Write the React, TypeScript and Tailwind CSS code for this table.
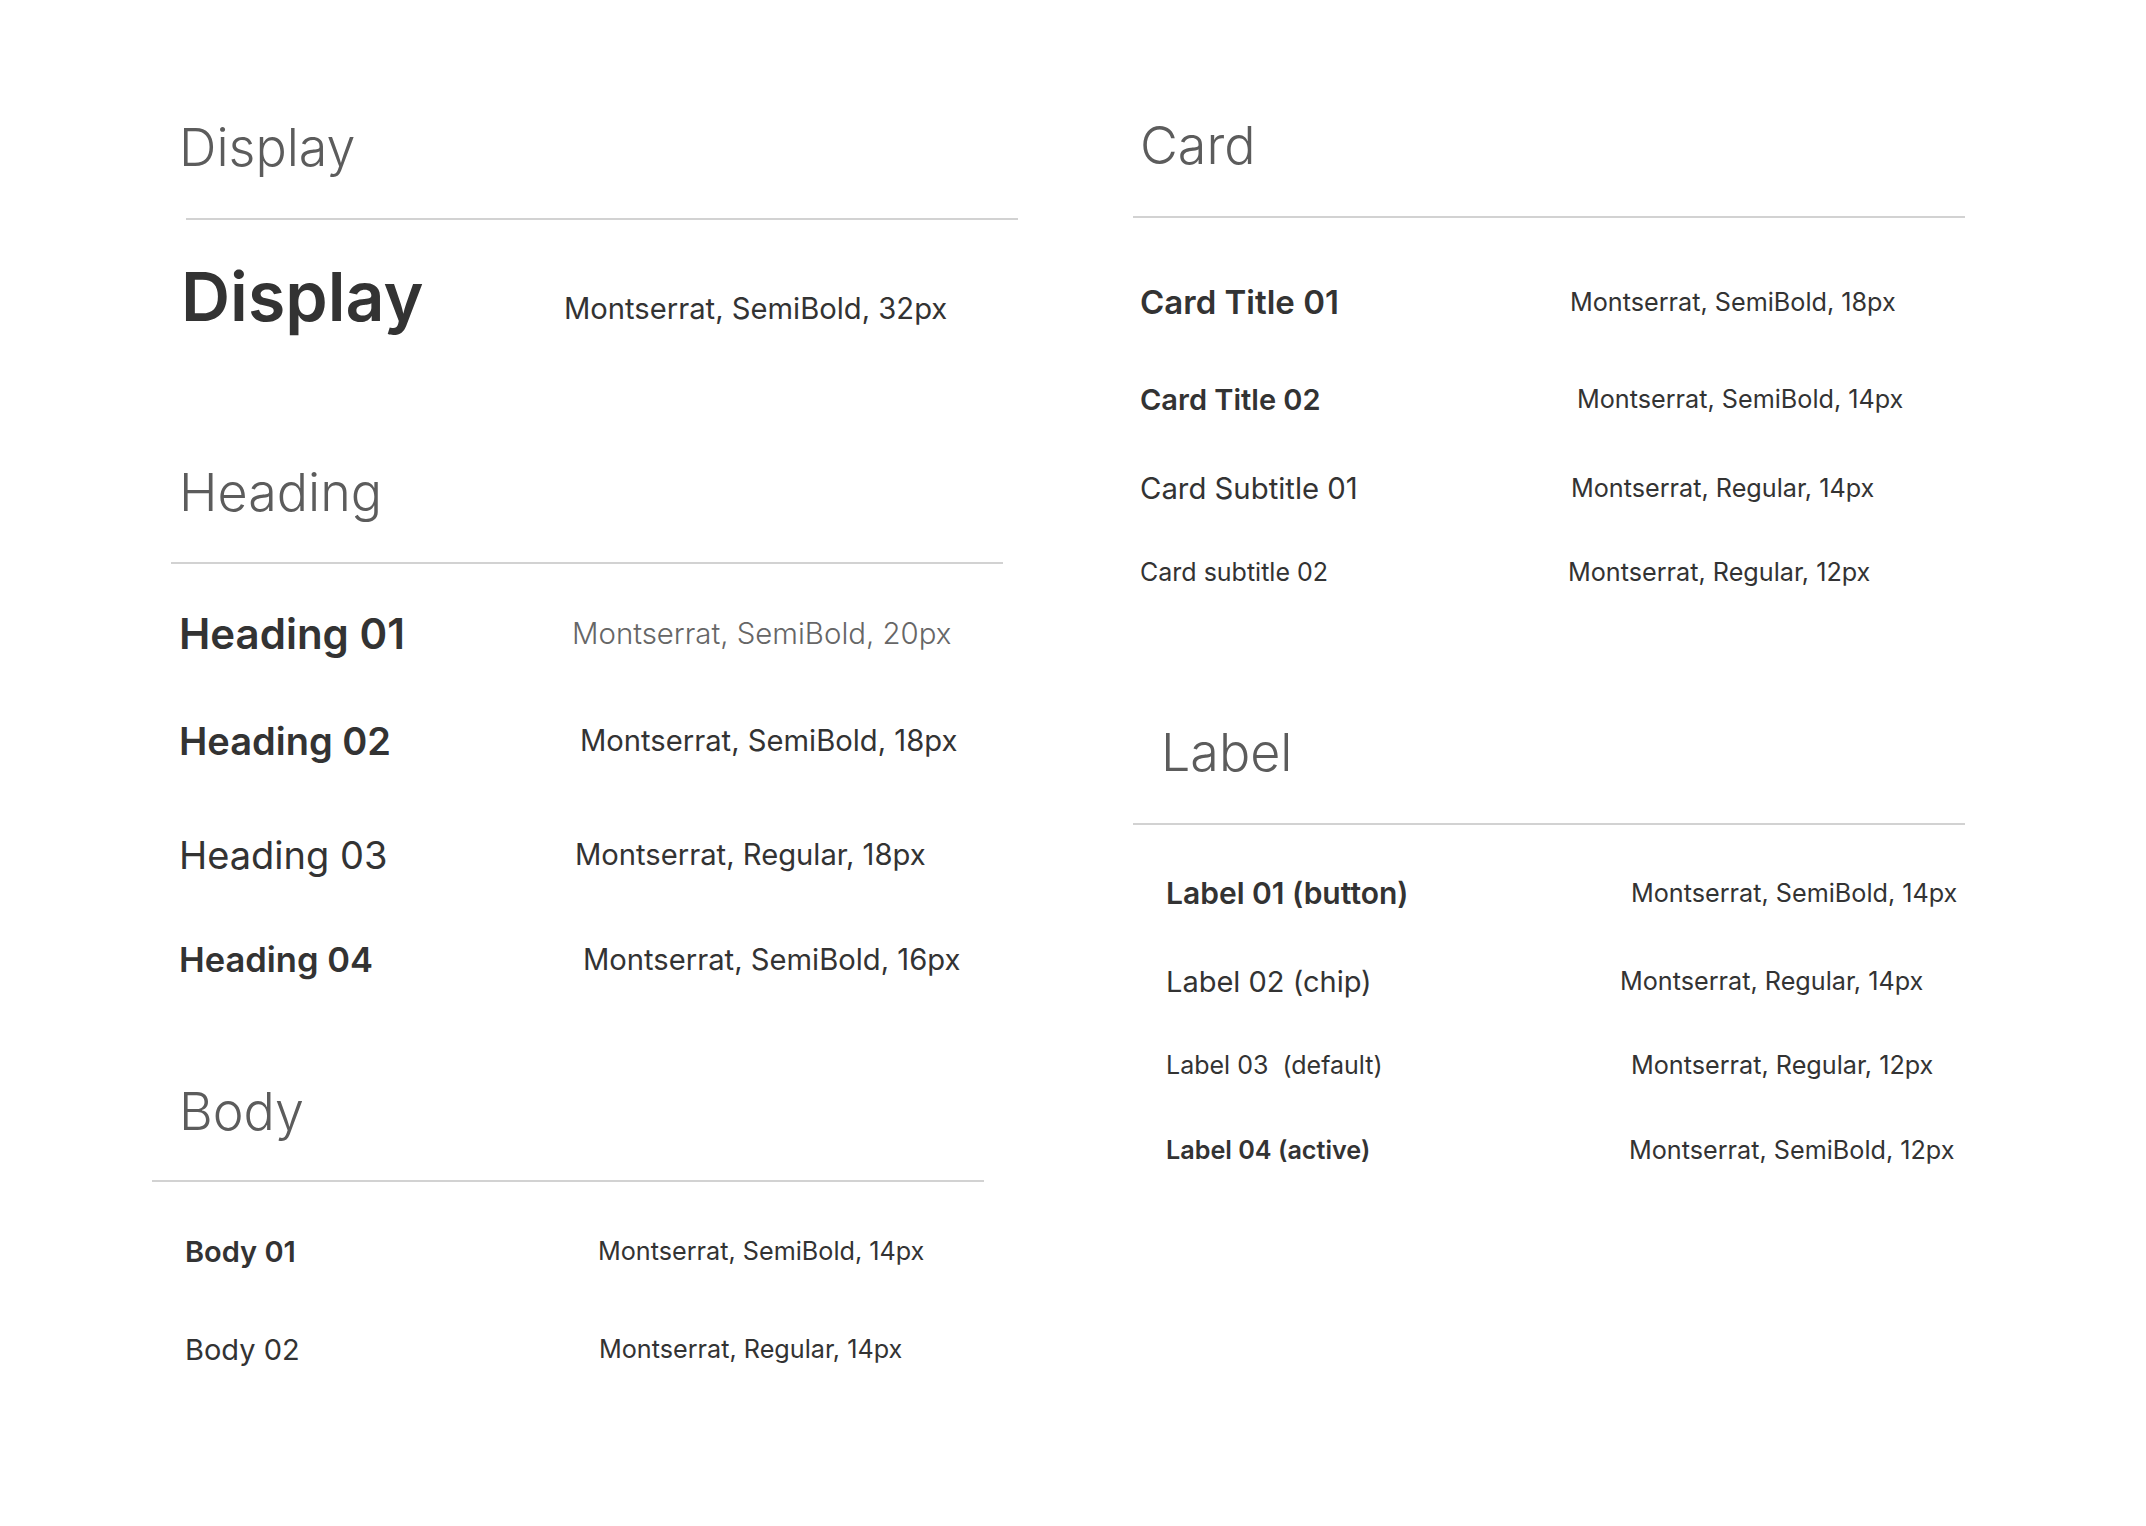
import React from 'react';

type Row = {
  label: string;
  desc: string;
  mt: string;
  labelBox: string;
  labelText: string;
  descText: string;
};

const font = { fontFamily: 'Inter, "Noto Sans", sans-serif' };

// Section title + divider
const SectionHeader: React.FC<{ title: string; mt: string; pad: string; line: string; lineMt: string }> = ({
  title,
  mt,
  pad,
  line,
  lineMt,
}) => (
  <>
    <div className={`flex h-[60px] items-center ${mt} ${pad}`}>
      <span className="text-[52px] font-light leading-none text-[#5c5c5c]">{title}</span>
    </div>
    <div className={`h-[2px] w-[832px] bg-[#d2d2d2] ${lineMt} ${line}`} />
  </>
);

const SpecRow: React.FC<{ row: Row; pad: string }> = ({ row, pad }) => (
  <div className={`flex h-[60px] items-center ${row.mt} ${pad}`}>
    <div className={`shrink-0 ${row.labelBox}`}>
      <span className={`whitespace-pre leading-none text-[#333333] ${row.labelText}`}>{row.label}</span>
    </div>
    <span className={`whitespace-pre leading-none ${row.descText}`}>{row.desc}</span>
  </div>
);

const bigDesc = 'text-[29.2px] font-normal text-[#333333]';
const smallDesc = 'text-[25.2px] font-normal text-[#333333]';

const headingRows: Row[] = [
  { label: 'Heading 01', desc: 'Montserrat, SemiBold, 20px', mt: 'mt-[40px]', labelBox: 'w-[393px]', labelText: 'text-[42px] font-semibold', descText: 'text-[29.4px] font-light text-[#666666]' },
  { label: 'Heading 02', desc: 'Montserrat, SemiBold, 18px', mt: 'mt-[47px]', labelBox: 'w-[401px]', labelText: 'text-[38px] font-semibold', descText: bigDesc },
  { label: 'Heading 03', desc: 'Montserrat, Regular, 18px', mt: 'mt-[54px]', labelBox: 'w-[396px]', labelText: 'text-[38px] font-normal', descText: bigDesc },
  { label: 'Heading 04', desc: 'Montserrat, SemiBold, 16px', mt: 'mt-[45px]', labelBox: 'w-[404px]', labelText: 'text-[34.5px] font-semibold', descText: bigDesc },
];

const bodyRows: Row[] = [
  { label: 'Body 01', desc: 'Montserrat, SemiBold, 14px', mt: 'mt-[40px]', labelBox: 'w-[413px]', labelText: 'text-[29px] font-semibold', descText: smallDesc },
  { label: 'Body 02', desc: 'Montserrat, Regular, 14px', mt: 'mt-[38px]', labelBox: 'w-[414px]', labelText: 'text-[29px] font-normal', descText: smallDesc },
];

const cardRows: Row[] = [
  { label: 'Card Title 01', desc: 'Montserrat, SemiBold, 18px', mt: 'mt-[55px]', labelBox: 'w-[430px]', labelText: 'text-[33px] font-semibold', descText: smallDesc },
  { label: 'Card Title 02', desc: 'Montserrat, SemiBold, 14px', mt: 'mt-[37px]', labelBox: 'w-[437px]', labelText: 'text-[29px] font-semibold', descText: smallDesc },
  { label: 'Card Subtitle 01', desc: 'Montserrat, Regular, 14px', mt: 'mt-[29px]', labelBox: 'w-[431px]', labelText: 'text-[29.3px] font-normal', descText: smallDesc },
  { label: 'Card subtitle 02', desc: 'Montserrat, Regular, 12px', mt: 'mt-[24px]', labelBox: 'w-[428px]', labelText: 'text-[25px] font-normal', descText: smallDesc },
];

const labelRows: Row[] = [
  { label: 'Label 01 (button)', desc: 'Montserrat, SemiBold, 14px', mt: 'mt-[39px]', labelBox: 'w-[465px]', labelText: 'text-[30px] font-semibold', descText: smallDesc },
  { label: 'Label 02 (chip)', desc: 'Montserrat, Regular, 14px', mt: 'mt-[28px]', labelBox: 'w-[454px]', labelText: 'text-[29px] font-normal', descText: smallDesc },
  { label: 'Label 03  (default)', desc: 'Montserrat, Regular, 12px', mt: 'mt-[24px]', labelBox: 'w-[465px]', labelText: 'text-[25px] font-normal', descText: smallDesc },
  { label: 'Label 04 (active)', desc: 'Montserrat, SemiBold, 12px', mt: 'mt-[25px]', labelBox: 'w-[463px]', labelText: 'text-[25.2px] font-semibold', descText: smallDesc },
];

export default function App() {
  return (
    <div className="flex h-[1526px] w-[2146px] bg-white" style={font}>
      {/* Left column */}
      <div className="ml-[150px] flex w-[870px] shrink-0 flex-col pt-[118px]">
        <SectionHeader title="Display" mt="" pad="pl-[29px]" line="ml-[36px]" lineMt="mt-[40px]" />
        <div className="mt-[36px] flex h-[80px] items-center pl-[31px]">
          <div className="w-[383px] shrink-0">
            <span className="text-[68px] font-semibold leading-none text-[#333333]">Display</span>
          </div>
          <span className={`mt-[26px] leading-none ${bigDesc}`}>Montserrat, SemiBold, 32px</span>
        </div>

        <SectionHeader title="Heading" mt="mt-[127px]" pad="pl-[29px]" line="ml-[21px]" lineMt="mt-[39px]" />
        {headingRows.map((r) => (
          <SpecRow key={r.label} row={r} pad="pl-[29px]" />
        ))}

        <SectionHeader title="Body" mt="mt-[92px]" pad="pl-[29px]" line="ml-[2px]" lineMt="mt-[38px]" />
        {bodyRows.map((r) => (
          <SpecRow key={r.label} row={r} pad="pl-[35px]" />
        ))}
      </div>

      {/* Right column */}
      <div className="ml-[113px] flex w-[832px] shrink-0 flex-col pt-[116px]">
        <SectionHeader title="Card" mt="" pad="pl-[7px]" line="" lineMt="mt-[40px]" />
        {cardRows.map((r) => (
          <SpecRow key={r.label} row={r} pad="pl-[7px]" />
        ))}

        <SectionHeader title="Label" mt="mt-[120px]" pad="pl-[28px]" line="" lineMt="mt-[40px]" />
        {labelRows.map((r) => (
          <SpecRow key={r.label} row={r} pad="pl-[33px]" />
        ))}
      </div>
    </div>
  );
}
